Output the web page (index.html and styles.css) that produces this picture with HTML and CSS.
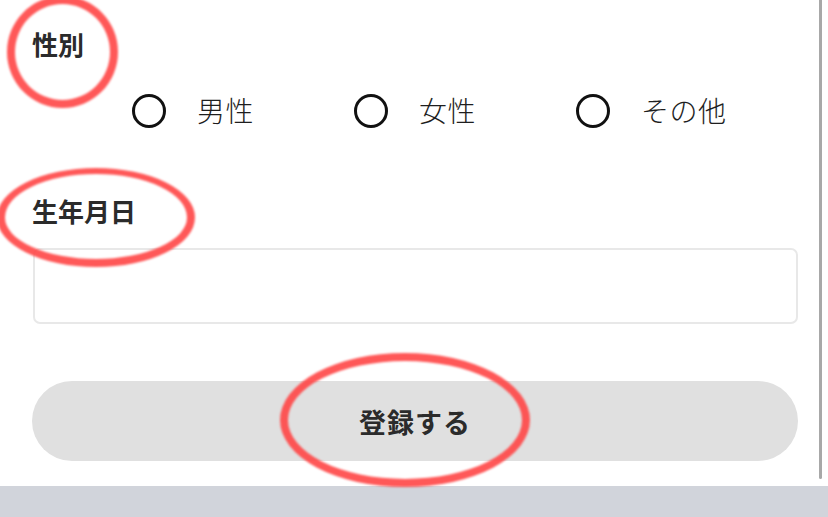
FILE: index.html
```html
<!DOCTYPE html>
<html lang="ja">
<head>
    <meta charset="UTF-8">
    <meta name="viewport" content="width=device-width, initial-scale=1.0">
    <title>会員登録</title>
    <link rel="stylesheet" href="styles.css">
</head>
<body>

<div class="screen">
    <div class="sheet">
        <!-- 登録フォーム -->
        <form class="form">
            <div class="label label-gender">性別</div>
            <div class="radio-group">
                <label class="radio"><span class="radio-mark"></span><span class="radio-text">男性</span></label>
                <label class="radio"><span class="radio-mark"></span><span class="radio-text">女性</span></label>
                <label class="radio"><span class="radio-mark"></span><span class="radio-text">その他</span></label>
            </div>

            <div class="label label-birth">生年月日</div>
            <input class="text-input" type="text">

            <button class="submit-button" type="button">登録する</button>
        </form>
        <div class="scrollbar"></div>
    </div>
    <div class="bottom-band"></div>

    <!-- 注釈マーク -->
    <span class="mark mark-gender"></span>
    <span class="mark mark-birth"></span>
    <span class="mark mark-submit"></span>
</div>

</body>
</html>
```

FILE: styles.css
```css
/* 全体 */
body {
    margin: 0;
    padding: 0;
    background: #ffffff;
    font-family: "Noto Sans CJK JP", "Noto Sans", sans-serif;
    color: #333333;
    overflow: hidden;
}

.screen {
    position: relative;
    width: 828px;
    height: 517px;
    display: flex;
    flex-direction: column;
}

.sheet {
    display: flex;
    height: 486px;
}

/* フォーム */
.form {
    flex: 1;
    padding: 27px 21px 0 32px;
    display: flex;
    flex-direction: column;
}

.label {
    font-size: 26px;
    font-weight: 700;
    line-height: 34px;
    color: #2b2b2b;
}

.radio-group {
    display: flex;
    margin: 30px 0 0 100px;
    height: 40px;
}

.radio {
    width: 222px;
    display: flex;
    align-items: center;
}

.radio-mark {
    width: 28px;
    height: 28px;
    border: 3.5px solid #111111;
    border-radius: 50%;
    margin-right: 31px;
}

.radio-text {
    font-size: 28px;
    font-weight: 300;
    color: #1e1e1e;
    letter-spacing: 0.5px;
    margin-top: -3px;
}

.label-birth {
    margin-top: 63px;
}

.text-input {
    margin-top: 20px;
    margin-left: 1px;
    height: 76px;
    box-sizing: border-box;
    border: 2px solid #e8e8e8;
    border-radius: 7px;
    background: #ffffff;
}

.submit-button {
    margin-top: 57px;
    height: 80px;
    border: none;
    border-radius: 40px;
    background-color: #e0e0e0;
    font-family: inherit;
    font-size: 27px;
    font-weight: 700;
    color: #2b2b2b;
    letter-spacing: 1px;
}

/* スクロールバー */
.scrollbar {
    width: 7px;
    height: 479px;
    margin-right: 6px;
    background: #a8a8a8;
    border-radius: 0 0 4px 4px;
}

.bottom-band {
    flex: 1;
    background: #d1d4db;
}

/* 赤丸の注釈 */
.mark {
    position: absolute;
    box-sizing: border-box;
    border: 8px solid rgba(255, 70, 70, 0.9);
    border-radius: 50%;
    filter: blur(0.8px);
}

.mark-gender {
    left: 7px;
    top: -4px;
    width: 111px;
    height: 112px;
}

.mark-birth {
    left: -3px;
    top: 168px;
    width: 198px;
    height: 99px;
    border-top-width: 6px;
}

.mark-submit {
    left: 280px;
    top: 353px;
    width: 250px;
    height: 134px;
}
```
